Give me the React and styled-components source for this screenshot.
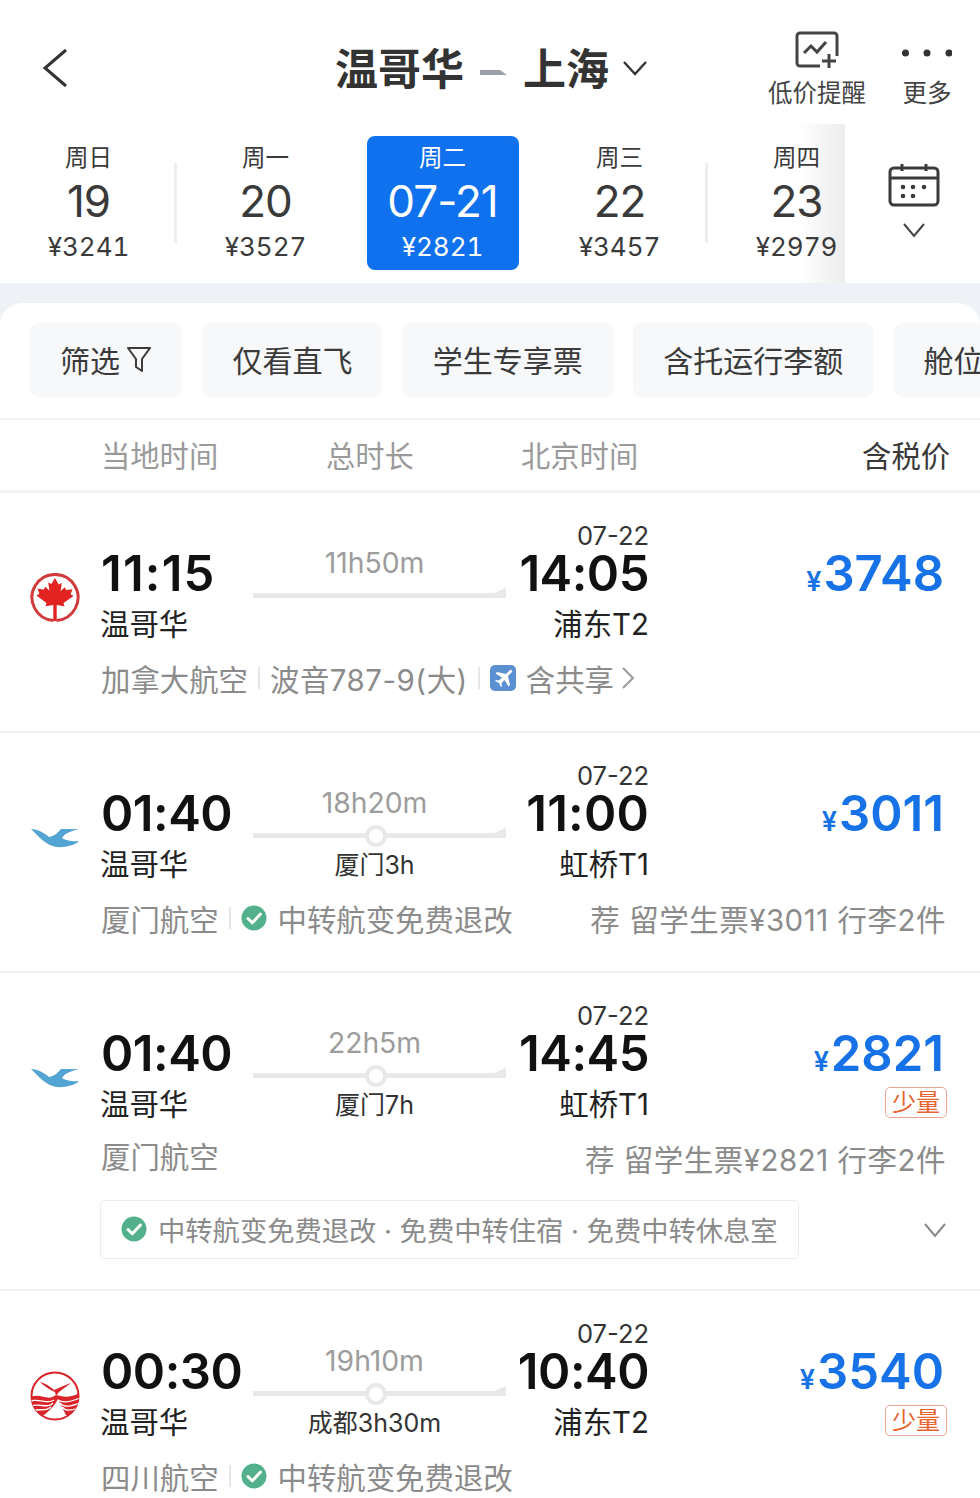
import React from "react";
import styled, { createGlobalStyle } from "styled-components";

const Global = createGlobalStyle`
  html, body { margin: 0; padding: 0; background: #fff; }
  * { box-sizing: border-box; }
`;
const SANS = `Inter, "Noto Sans CJK SC", sans-serif`;

const Page = styled.div`
  width: 980px; height: 1498px; overflow: hidden; background: #fff;
  font-family: ${SANS}; color: #333;
`;
const Nav = styled.header`
  height: 124px; display: flex; align-items: flex-start; position: relative;
`;
const Back = styled.svg`
  width: 30px; height: 42px; margin: 47px 0 0 40px; flex: none;
`;
const Title = styled.div`
  display: flex; align-items: center; margin: 41px 0 0 265px; height: 56px;
  font-size: 43px; font-weight: 700; color: #333; line-height: 56px; flex: none;
`;
const Dash = styled.svg`
  width: 30px; height: 10px; margin: 3px 14px 0 15px; flex: none;
`;
const TitleChevron = styled.svg`
  width: 26px; height: 16px; margin: -2px 0 0 13px; flex: none;
`;
const Action = styled.div`
  width: ${p => p.$w}px; margin-left: ${p => p.$ml}px; padding-top: ${p => p.$pt}px; flex: none;
  display: flex; flex-direction: column; align-items: center;
  font-size: 24.5px; color: #444; line-height: 34px; white-space: nowrap;
`;
const ActionIcon = styled.svg`
  flex: none; display: block;
`;
const ActionLabel = styled.span`
  margin-top: 6px;
`;
const DateBar = styled.section`
  height: 159px; display: flex;
`;
const Strip = styled.div`
  width: 845px; display: flex; position: relative; flex: none;
  &::after {
    content: ""; position: absolute; top: 0; bottom: 0; right: 0; width: 45px;
    background: linear-gradient(to right, rgba(238,238,238,0), #ececec);
  }
`;
const Day = styled.div`
  flex: 0 0 177px; position: relative; z-index: 1; padding: 12px 12.5px 13px;
  ${p => p.$sep ? `&::after { content: ""; position: absolute; right: 0; top: 39px; height: 80px; width: 3px; background: #eeeeee; }` : ""}
`;
const DayInner = styled.div`
  height: 134px; border-radius: 8px; display: flex; flex-direction: column; align-items: center;
  background: ${p => p.$active ? "#0f71ee" : "transparent"};
  color: ${p => p.$active ? "#fff" : "#3a3a3a"};
`;
const Week = styled.div`
  font-size: 23.5px; line-height: 34px; height: 34px; margin-top: 5px;
`;
const DayNum = styled.div`
  font-size: 44px; line-height: 52px; height: 52px; letter-spacing: -1px; white-space: nowrap;
`;
const DayPrice = styled.div`
  font-size: 26px; line-height: 36px; margin-top: 2px; white-space: nowrap; font-variant-numeric: tabular-nums;
`;
const CalBox = styled.div`
  flex: 1; display: flex; flex-direction: column; align-items: center; padding: 39px 0 0 3px;
`;
const CalChevron = styled.svg`
  width: 24px; height: 16px; margin-top: 15px; display: block;
`;
const Band = styled.div`
  height: 20px; background: #eef1f6;
`;
const Panel = styled.main`
  background: #eef1f6;
`;
const PanelInner = styled.div`
  background: #fff; border-radius: 22px 22px 0 0;
`;
const Filters = styled.div`
  display: flex; gap: 20.4px; padding: 20px 0 21px 30px; overflow: hidden;
  border-bottom: 2px solid #f0f3f6; height: 117px;
`;
const Chip = styled.div`
  flex: none; height: 74px; padding: 0 30px 2px; border-radius: 8px; background: #f6f8fa;
  display: flex; align-items: center; font-size: 30px; color: #3a3a3a; white-space: nowrap;
`;
const Funnel = styled.svg`
  width: 26px; height: 27px; margin: 0 0 0 6px; flex: none;
`;
const Columns = styled.div`
  height: 73px; display: grid; grid-template-columns: 101px 225px 195px 1fr auto;
  align-items: center; padding: 0 30px 2px 0; border-bottom: 3px solid #f0f2f5;
`;
const ColHead = styled.div`
  font-size: 29.3px; color: ${p => p.$dark ? "#3a3a3a" : "#9a9a9a"}; white-space: nowrap;
  grid-column: ${p => p.$col};
`;
const Card = styled.article`
  padding-top: 28px; border-bottom: 2px solid #f0f2f5; height: ${p => p.$h}px;
`;
const Main = styled.div`
  display: grid; grid-template-columns: 100px 153px 253px 143px 1fr;
  grid-template-rows: 30px 46px 10px 36px;
`;
const LogoCell = styled.div`
  grid-column: 1; grid-row: 2 / 5; padding: 22px 0 0 30px;
`;
const DateTag = styled.div`
  grid-column: 4; grid-row: 1; text-align: right; font-size: 25.5px; line-height: 30px; color: #333;
`;
const Time = styled.div`
  grid-column: ${p => p.$col}; grid-row: 2; text-align: ${p => p.$right ? "right" : "left"};
  font-size: 49px; font-weight: 600; line-height: 46px; color: #111; white-space: nowrap;
  letter-spacing: ${p => p.$ls ?? -0.5}px;
  margin-left: ${p => p.$right ? "-20px" : "1px"};
`;
const City = styled.div`
  grid-column: ${p => p.$col}; grid-row: 4; text-align: ${p => p.$right ? "right" : "left"};
  font-size: 29.4px; line-height: 36px; color: #222; white-space: nowrap;
  margin-left: ${p => p.$right ? "-20px" : "0"};
`;
const Route = styled.div`
  grid-column: 3; grid-row: 1 / 5; padding-top: 24px; display: flex; flex-direction: column; align-items: center;
`;
const Duration = styled.div`
  font-size: 28.3px; line-height: 36px; color: #9c9c9c; height: 36px; margin-right: 10px;
`;
const Line = styled.div`
  width: 253px; height: 5px; background: #e8e8e8; margin-top: 12px; position: relative; flex: none;
  &::after {
    content: ""; position: absolute; right: 0; top: -5px; border-style: solid; border-width: 0 0 5px 12px;
    border-color: transparent transparent #e8e8e8 transparent;
  }
`;
const ViaDot = styled.span`
  position: absolute; left: 123px; top: 50%; width: 22px; height: 22px; margin: -11px 0 0 -11px;
  border-radius: 50%; background: #fff; border: 4px solid #e8e8e8;
`;
const Via = styled.div`
  font-size: 25px; line-height: 32px; margin: 11px 10px 0 0; color: #333; white-space: nowrap;
`;
const PriceCol = styled.div`
  grid-column: 5; grid-row: 2 / 5; display: flex; flex-direction: column; align-items: flex-end; padding-right: 36px;
`;
const Price = styled.div`
  display: flex; align-items: baseline; height: 46px; line-height: 46px; color: #1672e6;
  font-size: 49px; font-weight: 600; white-space: nowrap;
`;
const Yen = styled.span`
  font-size: 27px; font-weight: 600; margin-right: 2px;
`;
const Badge = styled.span`
  margin-top: 10px; width: 62px; height: 31px; border: 1px solid #eda593; border-radius: 5px; margin-right: -3px;
  color: #e8642f; font-size: 24px; line-height: 29px; text-align: center; white-space: nowrap;
`;
const Meta = styled.div`
  height: 36px; margin-top: 17px; display: flex; align-items: center; padding: 0 34px 0 101px;
  font-size: 29.4px; color: #8b8b8b; white-space: nowrap;
`;
const LiftedName = styled.span`
  margin-top: -6px;
`;
const Model = styled.span`
  letter-spacing: .55px;
`;
const Sep = styled.i`
  width: 2px; height: 22px; background: #e6e6e6; margin: 0 10px; flex: none;
`;
const Chev = styled.svg`
  width: 14px; height: 24px; margin-left: 7px; flex: none;
`;
const Share = styled.svg`
  width: 26px; height: 26px; margin-right: 10px; flex: none;
`;
const Check = styled.svg`
  width: ${p => p.$s}px; height: ${p => p.$s}px; margin-right: 11px; flex: none;
`;
const Spacer = styled.div`
  flex: 1;
`;
const Perks = styled.div`
  display: flex; align-items: center; margin: 24px 33px 0 100px;
`;
const PerkBox = styled.div`
  width: 699px; height: 59px; border: 1px solid #ececec; border-radius: 5px; display: flex; align-items: center;
  padding: 0 0 2px 20px; font-size: 27.3px; color: #8b8b8b; white-space: nowrap; flex: none;
`;
const PerkChevron = styled.svg`
  width: 24px; height: 16px; margin-left: auto; flex: none;
`;
const Recommend = styled.span`
  font-size: 29.5px; color: #8b8b8b; letter-spacing: .5px;
`;

const CheckIcon = ({ s }) => (
  <Check $s={s} viewBox="0 0 26 26">
    <circle cx="13" cy="13" r="12.5" fill="#52b18c" />
    <path d="M7 13.5l4.3 4.3L19.5 9" fill="none" stroke="#fff" strokeWidth="3" strokeLinecap="round" strokeLinejoin="round" />
  </Check>
);

const MapleLogo = () => (
  <svg width="50" height="50" viewBox="0 0 50 50" style={{ display: "block" }}>
    <path d="M23.5 47.4A23 23 0 1 1 26.5 47.4" fill="none" stroke="#d23b3b" strokeWidth="3" />
    <path fill="#e32222" d="M25 5l3.600 6.500 3.200-1.500-1.200 8 4.200-3.800 1.400 2.800 6.300-.8-1.900 5 2.900 1.700L33.500 30l1 3.200-7.800-1.200V48h-3.400V32L15.500 33.200l1-3.200L6.500 22.400l2.900-1.700-1.900-5 6.300.8 1.400-2.800 4.200 3.800-1.200-8 3.200 1.500z" />
  </svg>
);
const XiamenLogo = () => (
  <svg width="50" height="50" viewBox="0 0 50 50" style={{ display: "block" }}>
    <path fill="#52a5d2" d="M1 16C8 16 14 20 19 24C24 23 28 20 31 16L49 16C41 18 35 20 32 25C36 28 43 28 49 28.500C45 32 33 35 27 34C17 33 9 24 1 16Z" />
  </svg>
);
const SichuanLogo = () => (
  <svg width="50" height="50" viewBox="0 0 50 50" style={{ display: "block" }}>
    <defs><clipPath id="sc"><circle cx="25" cy="25" r="24" /></clipPath></defs>
    <circle cx="25" cy="25" r="23.500" fill="#fff" stroke="#d9252a" strokeWidth="2" />
    <path fill="#d9252a" d="M10 11C15 12 21 16 24 19L31 16C35 14 38 13 41 12C37 15 33 18 29 21L26 25L25 21C20 19 14 15 10 11Z" />
    <g clipPath="url(#sc)">
      <path fill="#d9252a" d="M0 26C10 22 18 30 24 25C28 22 34 30 50 22V44H36C32 36 30 32 28 28C26 32 22 38 14 44H0Z" />
      <g fill="none" stroke="#fff" strokeWidth="1.300">
        <path d="M0 30C10 27 18 34 24 29M28 29C34 33 42 30 50 27" />
        <path d="M0 35C10 32 18 38 23 32M30 32C35 38 43 34 50 32" />
        <path d="M2 40C10 37 16 41 21 36M32 36C36 41 42 39 50 37" />
      </g>
    </g>
  </svg>
);

const flightChev = <Chev viewBox="0 0 14 24"><path d="M2 2l10 10L2 22" fill="none" stroke="#9a9a9a" strokeWidth="2" /></Chev>;

const days = [
  { w: "周日", n: "19", p: "¥3241", sep: true },
  { w: "周一", n: "20", p: "¥3527" },
  { w: "周二", n: "07-21", p: "¥2821", active: true },
  { w: "周三", n: "22", p: "¥3457", sep: true },
  { w: "周四", n: "23", p: "¥2979" },
];
const chips = ["仅看直飞", "学生专享票", "含托运行李额", "舱位"];

const Flight = ({ h, logo, dep, depLs, arr, arrLs, term, dur, via, price, few, children, perks }) => (
  <Card $h={h}>
    <Main>
      <LogoCell>{logo}</LogoCell>
      <DateTag>07-22</DateTag>
      <Time $col={2} $ls={depLs}>{dep}</Time>
      <City $col={2}>温哥华</City>
      <Route>
        <Duration>{dur}</Duration>
        <Line>{via && <ViaDot />}</Line>
        {via && <Via>{via}</Via>}
      </Route>
      <Time $col={4} $right $ls={arrLs}>{arr}</Time>
      <City $col={4} $right>{term}</City>
      <PriceCol>
        <Price><Yen>¥</Yen>{price}</Price>
        {few && <Badge>少量</Badge>}
      </PriceCol>
    </Main>
    <Meta>{children}</Meta>
    {perks}
  </Card>
);

export default function App() {
  return (
    <Page>
      <Global />
      <Nav>
        <Back viewBox="0 0 30 42"><path d="M26 3L5 21l21 18" fill="none" stroke="#333" strokeWidth="3" /></Back>
        <Title>
          温哥华
          <Dash viewBox="0 0 30 10"><path d="M1 4h20l7 5H1z" fill="#9aa0a6" /></Dash>
          上海
          <TitleChevron viewBox="0 0 26 16"><path d="M2 2l11 12L24 2" fill="none" stroke="#333" strokeWidth="2.400" /></TitleChevron>
        </Title>
        <Action $w={98} $ml={120} $pt={30}>
          <ActionIcon width="46" height="40" viewBox="0 0 46 40">
            <path d="M26 36H6a3 3 0 0 1-3-3V6a3 3 0 0 1 3-3h34a3 3 0 0 1 3 3v20" fill="none" stroke="#444" strokeWidth="3" />
            <path d="M10 23l7-7 6 6 9-10" fill="none" stroke="#444" strokeWidth="3" />
            <path d="M35 24v14M28 31h14" fill="none" stroke="#444" strokeWidth="3" />
          </ActionIcon>
          <ActionLabel>低价提醒</ActionLabel>
        </Action>
        <Action $w={54} $ml={34} $pt={30}>
          <ActionIcon width="50" height="40" viewBox="0 0 50 40">
            <circle cx="3.500" cy="23" r="3.500" fill="#333" /><circle cx="25" cy="23" r="3.500" fill="#333" /><circle cx="47" cy="23" r="3.500" fill="#333" />
          </ActionIcon>
          <ActionLabel>更多</ActionLabel>
        </Action>
      </Nav>
      <DateBar>
        <Strip>
          {days.map(d => (
            <Day key={d.w} $sep={d.sep}>
              <DayInner $active={d.active}>
                <Week>{d.w}</Week>
                <DayNum>{d.n}</DayNum>
                <DayPrice>{d.p}</DayPrice>
              </DayInner>
            </Day>
          ))}
        </Strip>
        <CalBox>
          <svg width="52" height="44" viewBox="0 0 52 44" style={{ display: "block" }}>
            <rect x="2" y="5" width="48" height="37" rx="4" fill="none" stroke="#3a3a3a" strokeWidth="3" />
            <path d="M2 15h48M14 1v7M38 1v7" fill="none" stroke="#3a3a3a" strokeWidth="3" />
            <g fill="#3a3a3a">
              <circle cx="15" cy="24" r="2.300" /><circle cx="25" cy="24" r="2.300" /><circle cx="36" cy="24" r="2.300" />
              <circle cx="15" cy="33" r="2.300" /><circle cx="25" cy="33" r="2.300" />
            </g>
          </svg>
          <CalChevron viewBox="0 0 24 16"><path d="M2 2l10 12L22 2" fill="none" stroke="#444" strokeWidth="2" /></CalChevron>
        </CalBox>
      </DateBar>
      <Band />
      <Panel>
        <PanelInner>
          <Filters>
            <Chip>筛选
              <Funnel viewBox="0 0 26 27"><path d="M2 2h22l-8 11v12l-6-4v-8z" fill="none" stroke="#3a3a3a" strokeWidth="2" strokeLinejoin="round" /></Funnel>
            </Chip>
            {chips.map(c => <Chip key={c}>{c}</Chip>)}
          </Filters>
          <Columns>
            <ColHead $col={2}>当地时间</ColHead>
            <ColHead $col={3}>总时长</ColHead>
            <ColHead $col={4}>北京时间</ColHead>
            <ColHead $col={5} $dark>含税价</ColHead>
          </Columns>
          <Flight h={240} logo={<MapleLogo />} dep="11:15" depLs={1.2} arr="14:05" term="浦东T2" dur="11h50m" price="3748">
            加拿大航空<Sep /><Model>波音787-9(大)</Model><Sep />
            <Share viewBox="0 0 26 26">
              <rect width="26" height="26" rx="5" fill="#5b90d2" />
              <path d="M20 5l-4 4-9-2-1.500 1.500 6.500 4-3 3-3-.5L5 16l4 2 2 4 1-1-.5-3 3-3 4 6.500 1.500-1.500-2-9 4-4c1-1-1-3-2-2z" fill="#fff" />
            </Share>
            含共享
            {flightChev}
          </Flight>
          <Flight h={240} logo={<XiamenLogo />} dep="01:40" arr="11:00" arrLs={0.2} term="虹桥T1" dur="18h20m" via="厦门3h" price="3011">
            厦门航空<Sep /><CheckIcon s={26} />中转航变免费退改
            <Spacer />
            <Recommend>荐 留学生票¥3011 行李2件</Recommend>
          </Flight>
          <Flight
            h={318} logo={<XiamenLogo />} dep="01:40" arr="14:45" term="虹桥T1" dur="22h5m" via="厦门7h" price="2821" few
            perks={
              <Perks>
                <PerkBox><CheckIcon s={26} />中转航变免费退改 · 免费中转住宿 · 免费中转休息室</PerkBox>
                <PerkChevron viewBox="0 0 24 16"><path d="M2 2l10 12L22 2" fill="none" stroke="#888" strokeWidth="2" /></PerkChevron>
              </Perks>
            }
          >
            <LiftedName>厦门航空</LiftedName>
            <Spacer />
            <Recommend>荐 留学生票¥2821 行李2件</Recommend>
          </Flight>
          <Flight h={240} logo={<SichuanLogo />} dep="00:30" arr="10:40" term="浦东T2" dur="19h10m" via="成都3h30m" price="3540" few>
            四川航空<Sep /><CheckIcon s={26} />中转航变免费退改
          </Flight>
        </PanelInner>
      </Panel>
    </Page>
  );
}
